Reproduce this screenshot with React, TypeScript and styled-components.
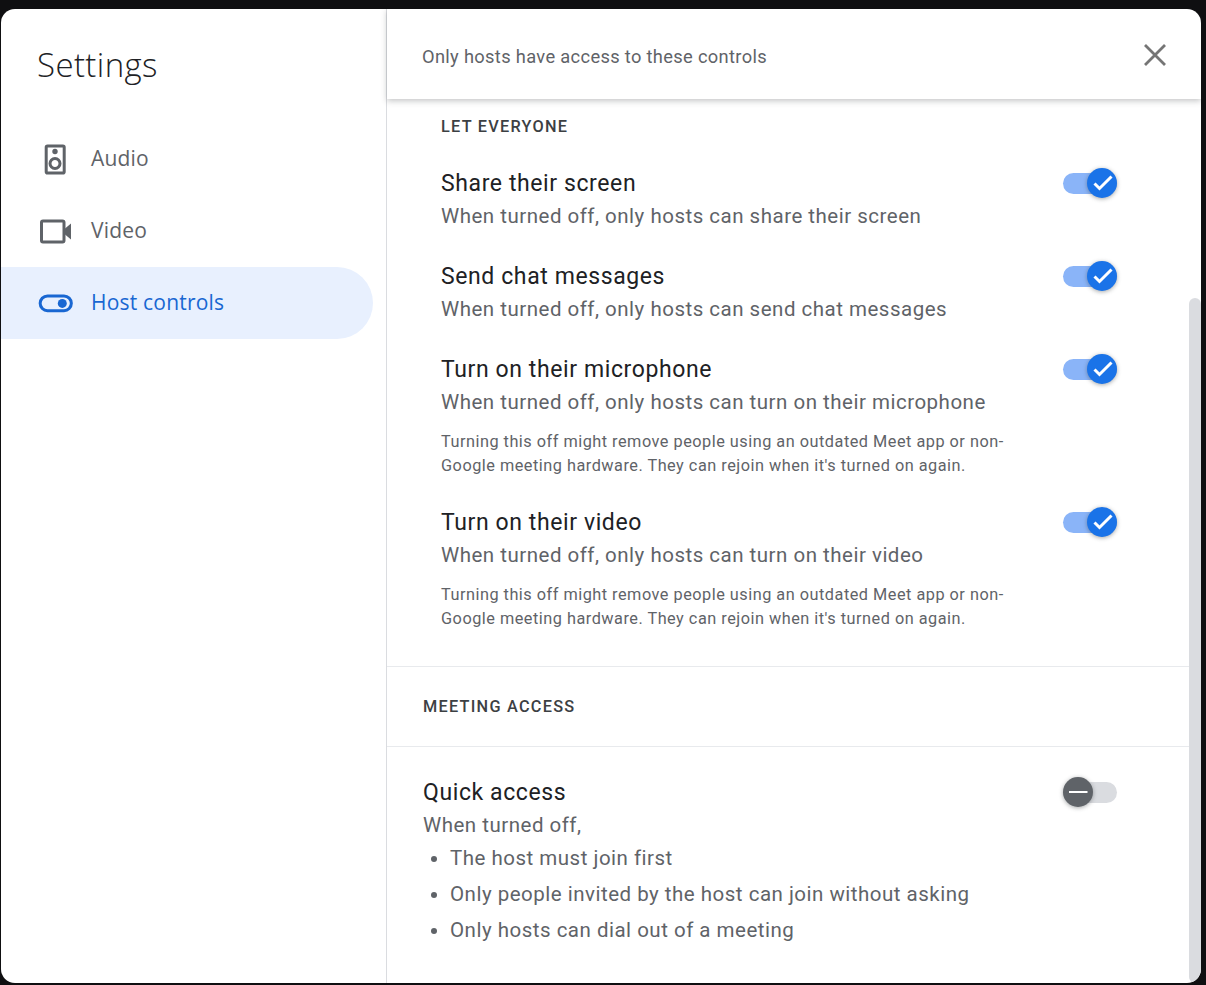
import React from "react";
import styled, { createGlobalStyle } from "styled-components";

const GlobalStyle = createGlobalStyle`
  html, body {
    margin: 0;
    height: 100%;
    background: #0f0f11;
  }
  * {
    box-sizing: border-box;
  }
`;

const Page = styled.div`
  width: 1206px;
  height: 985px;
  padding: 9px 5px 2px 1px;
  overflow: hidden;
  background: #0f0f11;
  font-family: Roboto, "Liberation Sans", sans-serif;
`;

const Dialog = styled.div`
  display: flex;
  height: 100%;
  background: #fff;
  border-radius: 14px;
  overflow: hidden;
`;

const Sidebar = styled.aside`
  width: 386px;
  flex-shrink: 0;
  border-right: 1px solid #dadce0;
`;

const Title = styled.h1`
  margin: 0;
  padding: 33px 0 0 36px;
  height: 114px;
  font-family: "Open Sans", sans-serif;
  font-size: 33px;
  line-height: 46px;
  font-weight: 300;
  letter-spacing: 0.4px;
  color: #202124;
`;

const Nav = styled.nav`
  display: flex;
  flex-direction: column;
  padding-right: 13px;
`;

const NavItem = styled.div<{ $active?: boolean }>`
  display: flex;
  align-items: center;
  height: 72px;
  padding: 0 0 2px 36px;
  gap: 17px;
  border-radius: 0 36px 36px 0;
  background: ${(props) => (props.$active ? "#e8f0fe" : "transparent")};
  color: ${(props) => (props.$active ? "#1967d2" : "#5f6368")};
  font-family: "Open Sans", sans-serif;
  font-size: 21px;
  font-weight: 500;
  letter-spacing: 0.2px;
`;

const NavIcon = styled.svg`
  width: 37px;
  height: 37px;
  flex-shrink: 0;
  margin-top: 2px;
  fill: currentColor;
  stroke: currentColor;
  stroke-width: 0;
`;

const NavOutline = styled.path`
  fill: none;
  stroke-width: 3;
`;

const Main = styled.main`
  flex: 1;
  min-width: 0;
  display: flex;
  flex-direction: column;
`;

const Header = styled.header`
  height: 90px;
  flex-shrink: 0;
  display: flex;
  align-items: center;
  justify-content: space-between;
  padding: 1px 30px 0 35px;
  position: relative;
  z-index: 1;
  box-shadow: 0 2px 6px rgba(60, 64, 67, 0.3);
  color: #5f6368;
  font-size: 18.3px;
  letter-spacing: 0.33px;
`;

const HeaderText = styled.span`
  margin-top: 4px;
`;

const CloseIcon = styled.svg`
  width: 32px;
  height: 32px;
  stroke: #757575;
  stroke-width: 2.8;
  fill: none;
`;

const Body = styled.div`
  flex: 1;
  min-height: 0;
  display: flex;
`;

const Content = styled.div`
  flex: 1;
  min-width: 0;
  overflow: hidden;
`;

const ScrollTrack = styled.div`
  width: 12px;
  flex-shrink: 0;
  padding-top: 199px;
`;

const ScrollThumb = styled.div`
  height: 100%;
  background: #dadce0;
  border-radius: 6px;
`;

const Section = styled.section`
  display: flex;
  flex-direction: column;
  padding: 18px 72px 34px 54px;
`;

const SectionLabel = styled.div`
  margin-bottom: 3px;
  font-size: 16.3px;
  line-height: 20px;
  font-weight: 500;
  letter-spacing: 1.25px;
  color: #3c4043;
`;

const BarLabel = styled(SectionLabel)`
  height: 81px;
  margin-bottom: 0;
  padding: 30px 0 0 36px;
  border-top: 1px solid #e8eaed;
  border-bottom: 1px solid #e8eaed;
`;

const Row = styled.div`
  display: grid;
  grid-template-columns: 1fr 54px;
  margin-top: 27px;
`;

const RowTitle = styled.div`
  font-size: 23px;
  line-height: 33px;
  letter-spacing: 0.6px;
  color: #202124;
`;

const RowDesc = styled.div`
  font-size: 20.5px;
  line-height: 33px;
  letter-spacing: 0.5px;
  color: #5f6368;
`;

const RowNote = styled.div`
  margin: 11px 0 1px;
  max-width: 570px;
  font-size: 16.3px;
  line-height: 24px;
  letter-spacing: 0.5px;
  color: #5f6368;
`;

const Toggle = styled.div<{ $on?: boolean }>`
  position: relative;
  width: 54px;
  height: 21px;
  margin-top: 6px;
  border-radius: 11px;
  background: ${(props) => (props.$on ? "#8ab4f8" : "#dadce0")};
`;

const Knob = styled.div<{ $on?: boolean }>`
  position: absolute;
  top: -5px;
  ${(props) => (props.$on ? "right: 0;" : "left: 0;")}
  width: 30px;
  height: 30px;
  border-radius: 50%;
  background: ${(props) => (props.$on ? "#1a73e8" : "#5f6368")};
  box-shadow: 0 1px 4px rgba(60, 64, 67, 0.45);
`;

const KnobIcon = styled.svg`
  display: block;
  width: 30px;
  height: 30px;
  fill: none;
  stroke: #fff;
`;

const QuickRow = styled(Row)`
  padding: 29px 72px 0 36px;
  margin-top: 0;
`;

const Bullets = styled.ul`
  margin: -2px 0 0;
  padding: 0 0 0 27px;
  font-size: 20.5px;
  line-height: 36px;
  letter-spacing: 0.5px;
  color: #5f6368;
`;

const rows = [
  {
    title: "Share their screen",
    desc: "When turned off, only hosts can share their screen",
  },
  {
    title: "Send chat messages",
    desc: "When turned off, only hosts can send chat messages",
  },
  {
    title: "Turn on their microphone",
    desc: "When turned off, only hosts can turn on their microphone",
    note: "Turning this off might remove people using an outdated Meet app or non-Google meeting hardware. They can rejoin when it's turned on again.",
  },
  {
    title: "Turn on their video",
    desc: "When turned off, only hosts can turn on their video",
    note: "Turning this off might remove people using an outdated Meet app or non-Google meeting hardware. They can rejoin when it's turned on again.",
  },
];

const Switch: React.FC<{ on?: boolean }> = ({ on }) => (
  <Toggle $on={on}>
    <Knob $on={on}>
      <KnobIcon viewBox="0 0 30 30">
        {on ? (
          <path d="M7.5 15.5l5 5L24.5 8.5" strokeWidth="3" />
        ) : (
          <path d="M6 15h18.5" strokeWidth="2.2" />
        )}
      </KnobIcon>
    </Knob>
  </Toggle>
);

const App: React.FC = () => (
  <Page>
    <GlobalStyle />
    <Dialog>
      <Sidebar>
        <Title>Settings</Title>
        <Nav>
          <NavItem>
            <NavIcon viewBox="0 0 37 37">
              <NavOutline d="M10.500 5h15.400a1.300 1.300 0 0 1 1.300 1.300v24.400a1.300 1.300 0 0 1-1.300 1.300H10.500a1.300 1.300 0 0 1-1.300-1.300V6.300a1.300 1.300 0 0 1 1.300-1.300z" />
              <circle cx="18" cy="10.500" r="2.700" />
              <NavOutline d="M13 22.500a5 5 0 1 0 10 0a5 5 0 1 0-10 0z" />
            </NavIcon>
            Audio
          </NavItem>
          <NavItem>
            <NavIcon viewBox="0 0 37 37">
              <NavOutline d="M6 8h19.500a1.500 1.500 0 0 1 1.500 1.500v18a1.500 1.500 0 0 1-1.500 1.500H6a1.500 1.500 0 0 1-1.500-1.500v-18A1.500 1.500 0 0 1 6 8z" />
              <path d="M28 15.500l6-5v16l-6-5z" />
            </NavIcon>
            Video
          </NavItem>
          <NavItem $active>
            <NavIcon viewBox="0 0 37 37">
              <NavOutline d="M10.500 11h16.500a7.350 7.350 0 0 1 0 14.700H10.500a7.350 7.350 0 0 1 0-14.700z" />
              <circle cx="25.300" cy="18.400" r="4.500" />
            </NavIcon>
            Host controls
          </NavItem>
        </Nav>
      </Sidebar>
      <Main>
        <Header>
          <HeaderText>Only hosts have access to these controls</HeaderText>
          <CloseIcon viewBox="0 0 32 32">
            <path d="M6 6l20 20M26 6L6 26" />
          </CloseIcon>
        </Header>
        <Body>
          <Content>
            <Section>
              <SectionLabel>LET EVERYONE</SectionLabel>
              {rows.map((row) => (
                <Row key={row.title}>
                  <div>
                    <RowTitle>{row.title}</RowTitle>
                    <RowDesc>{row.desc}</RowDesc>
                    {row.note && <RowNote>{row.note}</RowNote>}
                  </div>
                  <Switch on />
                </Row>
              ))}
            </Section>
            <BarLabel>MEETING ACCESS</BarLabel>
            <QuickRow>
              <div>
                <RowTitle>Quick access</RowTitle>
                <RowDesc>When turned off,</RowDesc>
                <Bullets>
                  <li>The host must join first</li>
                  <li>Only people invited by the host can join without asking</li>
                  <li>Only hosts can dial out of a meeting</li>
                </Bullets>
              </div>
              <Switch />
            </QuickRow>
          </Content>
          <ScrollTrack>
            <ScrollThumb />
          </ScrollTrack>
        </Body>
      </Main>
    </Dialog>
  </Page>
);

export default App;
